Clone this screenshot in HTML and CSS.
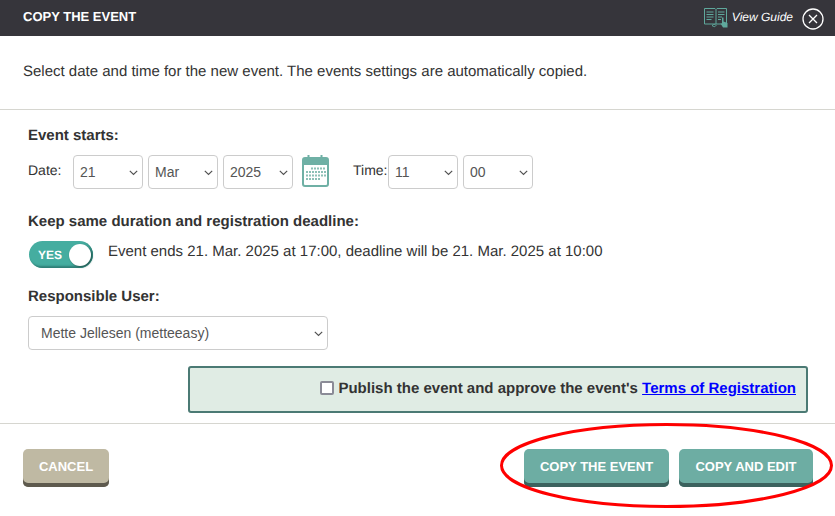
FILE: index.html
```html
<!DOCTYPE html>
<html lang="en">
<head>
<meta charset="utf-8">
<title>Copy the event</title>
<link rel="stylesheet" href="styles.css">
</head>
<body>
<header class="topbar">
  <h1 class="topbar-title">COPY THE EVENT</h1>
  <div class="topbar-tools">
    <svg class="guide-icon" width="25" height="20" viewBox="0 0 25 20" fill="none" stroke="#5fa89c" stroke-width="1">
      <path d="M.5.5h10.500l1 1v14.500h-11.500z"/>
      <path d="M12 1.500l1-1h9.500v15.500h-10.500"/>
      <path d="M2.500 4h7M2.500 6.500h7M2.500 9h7M2.500 11.500h5M14 4h6.500M14 6.500h6.500M14 9h4M14 11.500h3"/>
      <path d="M8 17.500c2-1.500 3-1.500 4 0-1 1.500-2 1.500-4 0z"/>
      <path d="M18 9.500h1.500v4l4 1.500v4.500h-4.500l-2.500-4h1.500z" fill="#5fa89c" stroke="none"/>
    </svg>
    <span class="guide-label">View Guide</span>
    <svg class="close-icon" width="22" height="22" viewBox="0 0 22 22" fill="none" stroke="#fff">
      <circle cx="11" cy="11" r="10" stroke-width="1.300"/>
      <path d="M7 7l8 8M15 7l-8 8" stroke-width="1.300"/>
    </svg>
  </div>
</header>

<p class="intro">Select date and time for the new event. The events settings are automatically copied.</p>

<main class="form">
  <h2 class="label first">Event starts:</h2>
  <div class="date-row">
    <span class="field-name date-name">Date:</span>
    <select class="pick"><option>21</option></select>
    <select class="pick"><option>Mar</option></select>
    <select class="pick"><option>2025</option></select>
    <svg class="cal-icon" width="27" height="33" viewBox="0 0 27 33">
      <rect x="1" y="3" width="25" height="28" rx="2" fill="#fff" stroke="#6fb0a5" stroke-width="2"/>
      <path d="M1 5a2 2 0 0 1 2-2h21a2 2 0 0 1 2 2v5H1z" fill="#6fb0a5"/>
      <path d="M6.500 0v6M19.500 0v6" stroke="#6fb0a5" stroke-width="2"/>
      <path d="M9 13.500h15M4 17h20M4 20.500h20M4 24h14" stroke="#8cc0b6" stroke-width="2" stroke-dasharray="2 1"/>
    </svg>
    <span class="field-name time-name">Time:</span>
    <select class="pick"><option>11</option></select>
    <select class="pick"><option>00</option></select>
  </div>

  <h2 class="label keep">Keep same duration and registration deadline:</h2>
  <div class="toggle-row">
    <div class="toggle"><span class="toggle-text">YES</span><span class="knob"></span></div>
    <p class="toggle-note">Event ends 21. Mar. 2025 at 17:00, deadline will be 21. Mar. 2025 at 10:00</p>
  </div>

  <h2 class="label resp">Responsible User:</h2>
  <select class="user-pick"><option>Mette Jellesen (metteeasy)</option></select>

  <div class="publish">
    <input class="publish-check" type="checkbox" id="pub">
    <label for="pub">Publish the event and approve the event's <a href="#">Terms of Registration</a></label>
  </div>
</main>

<footer class="actions">
  <button class="btn btn-cancel">CANCEL</button>
  <div class="actions-right">
    <button class="btn btn-copy">COPY THE EVENT</button>
    <button class="btn btn-edit">COPY AND EDIT</button>
    <svg class="ring" width="335" height="88" viewBox="0 0 335 88" fill="none">
      <ellipse cx="166.500" cy="43.500" rx="165" ry="41" stroke="#f00" stroke-width="3"/>
    </svg>
  </div>
</footer>
</body>
</html>
```

FILE: styles.css
```css
* { box-sizing: border-box; }
html, body { margin: 0; padding: 0; }
body {
  width: 835px;
  height: 516px;
  overflow: hidden;
  background: #fff;
  color: #333;
  font-family: "Liberation Sans", Arial, sans-serif;
  font-size: 15px;
  text-rendering: geometricPrecision;
}
.topbar {
  height: 36px;
  background: #36353b;
  color: #fff;
  display: flex;
  justify-content: space-between;
  align-items: center;
  padding: 0 11px 3px 23px;
}
.topbar-title { margin: 0; font-size: 13px; font-weight: 700; line-height: 20px; }
.topbar-tools { display: flex; align-items: center; }
.guide-icon { margin-top: 2px; margin-right: 3px; }
.guide-label { font-size: 12px; font-style: italic; margin-top: 1px; }
.close-icon { margin-left: 9px; margin-top: 4px; }
.intro {
  margin: 0;
  height: 74px;
  padding: 26px 0 0 23px;
  line-height: 19px;
  border-bottom: 1px solid #d6d6d0;
}
.form { padding-left: 28px; height: 314px; border-bottom: 1px solid #d6d6d0; }
.label { margin: 0; font-size: 15px; font-weight: 700; line-height: 18px; }
.first { padding-top: 17px; height: 35px; }
.date-row { display: flex; align-items: flex-start; margin-top: 10px; height: 34px; }
.field-name { line-height: 17px; padding-top: 7px; font-size: 14px; }
.date-name { width: 45px; }
.time-name { width: 35px; margin-left: 24px; }
.pick, .user-pick {
  appearance: none;
  height: 34px;
  border: 1px solid #ccc;
  border-radius: 4px;
  background-color: #fff;
  background-image: url("data:image/svg+xml,%3Csvg xmlns='http://www.w3.org/2000/svg' width='9' height='6'%3E%3Cpath d='M.8.8l3.700 3.700 3.700-3.700' fill='none' stroke='%23555' stroke-width='1.200'/%3E%3C/svg%3E");
  background-repeat: no-repeat;
  color: #555;
  font-family: inherit;
  font-size: 14px;
}
.pick {
  width: 70px;
  margin-right: 5px;
  padding: 0 6px;
  background-position: 55px 14px;
}
.cal-icon { margin: 0 0 0 4px; flex: none; }
.keep { margin-top: 24px; }
.toggle-row { display: flex; align-items: flex-start; margin-top: 10px; height: 27px; }
.toggle {
  margin-left: 1px;
  width: 64px;
  height: 27px;
  border-radius: 14px;
  background: #45ada0;
  box-shadow: inset -2px -2px 2px #2f7f76;
  display: flex;
  align-items: center;
  justify-content: space-between;
  padding: 0 2px 0 9px;
  color: #fff;
}
.toggle-text { font-size: 12px; font-weight: 700; }
.knob {
  width: 22px;
  height: 22px;
  border-radius: 50%;
  background: #fff;
  box-shadow: 1px 1px 2px #245c55;
}
.toggle-note { margin: 0 0 0 15px; line-height: 20px; padding-top: 1px; }
.resp { margin-top: 20px; }
.user-pick {
  display: block;
  width: 300px;
  margin-top: 10px;
  padding: 0 12px;
  background-position: 285px 14px;
}
.publish {
  margin: 16px 0 0 160px;
  width: 620px;
  height: 47px;
  padding: 0 10px 3px 0;
  border: 2px solid #4b7a74;
  border-radius: 3px;
  background: #e0ece4;
  display: flex;
  align-items: center;
  justify-content: flex-end;
  font-weight: 700;
  color: #333;
}
.publish-check {
  appearance: none;
  width: 14px;
  height: 14px;
  margin: 0 4px 0 0;
  border: 2px solid #8b8b97;
  border-radius: 2px;
  background: #fff;
}
.publish a { color: #00f; }
.actions {
  display: flex;
  justify-content: space-between;
  align-items: flex-start;
  padding: 25px 22px 0 23px;
}
.actions-right { position: relative; display: flex; gap: 10px; }
.btn {
  height: 38px;
  border: 0;
  border-radius: 5px;
  color: #fff;
  font-family: inherit;
  font-size: 13px;
  font-weight: 700;
  padding: 0 0 4px;
  white-space: nowrap;
}
.btn-cancel { width: 86px; background: #bfb9a3; box-shadow: inset 0 -4px 0 #5e5a4e; }
.btn-copy { width: 145px; background: #6dada3; box-shadow: inset 0 -4px 0 #3c625e; }
.btn-edit { width: 134px; background: #6dada3; box-shadow: inset 0 -4px 0 #3c625e; }
.ring { position: absolute; left: -24px; top: -27px; pointer-events: none; }
```
